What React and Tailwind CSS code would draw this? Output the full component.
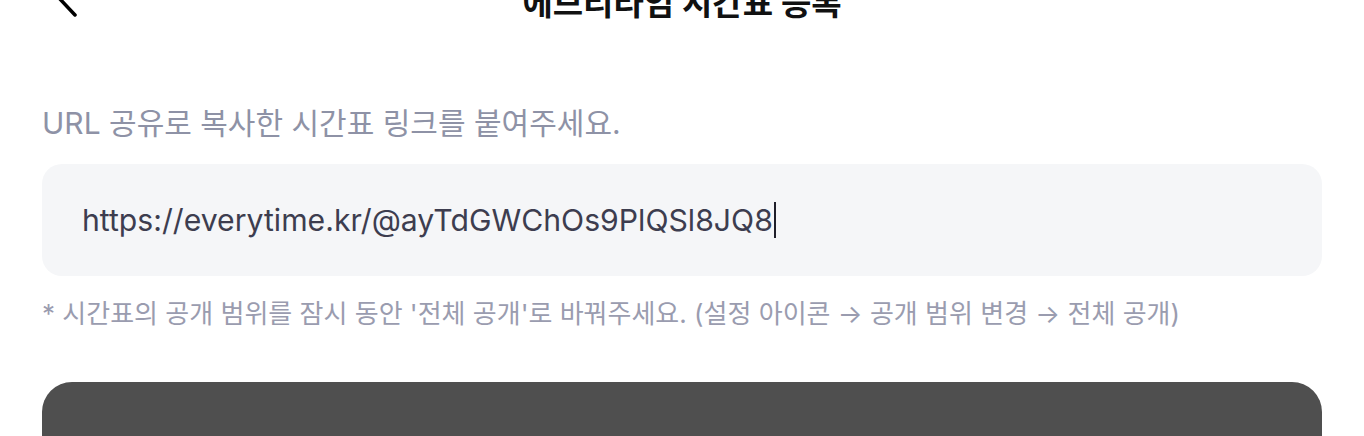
import { useState } from 'react'

const FONT = { fontFamily: '"Inter", "Noto Sans CJK KR", sans-serif' }

export default function App() {
  const [url] = useState('https://everytime.kr/@ayTdGWChOs9PlQSl8JQ8')

  return (
    <div className="min-h-screen bg-white overflow-hidden" style={FONT}>
      {/* Header */}
      <header className="relative flex items-center justify-center h-[72px] -mt-[32px]">
        <button className="absolute left-[55px] top-[10px] text-black">
          <svg width="24" height="40" viewBox="0 0 24 40" fill="none">
            <path d="M20 3 L4 20 L20 37" stroke="currentColor" strokeWidth="3.5" strokeLinecap="round" strokeLinejoin="round" />
          </svg>
        </button>
        <h1 className="text-[33px] font-bold text-[#111111]">에브리타임 시간표 등록</h1>
      </header>

      <main className="px-[42px]">
        <p className="mt-[63px] text-[30px] leading-[40px] text-[#8e92a6]">
          URL 공유로 복사한 시간표 링크를 붙여주세요.
        </p>

        <div className="mt-[21px] h-[112px] rounded-[20px] bg-[#f5f6f8] pl-[40px] pr-6 flex items-center">
          <span className="text-[30.2px] text-[#3d3d4f] leading-none">{url}</span>
          <span className="ml-[1px] w-[2px] h-[36px] bg-[#1f1f2a]" />
        </div>

        <p className="mt-[21px] text-[26px] leading-[34px] text-[#9a9caf]">
          * 시간표의 공개 범위를 잠시 동안 '전체 공개'로 바꿔주세요. (설정 아이콘 → 공개 범위 변경 → 전체 공개)
        </p>

        <button className="mt-[51px] w-full h-[120px] rounded-[30px] bg-[#4f4f4f]" />
      </main>
    </div>
  )
}
